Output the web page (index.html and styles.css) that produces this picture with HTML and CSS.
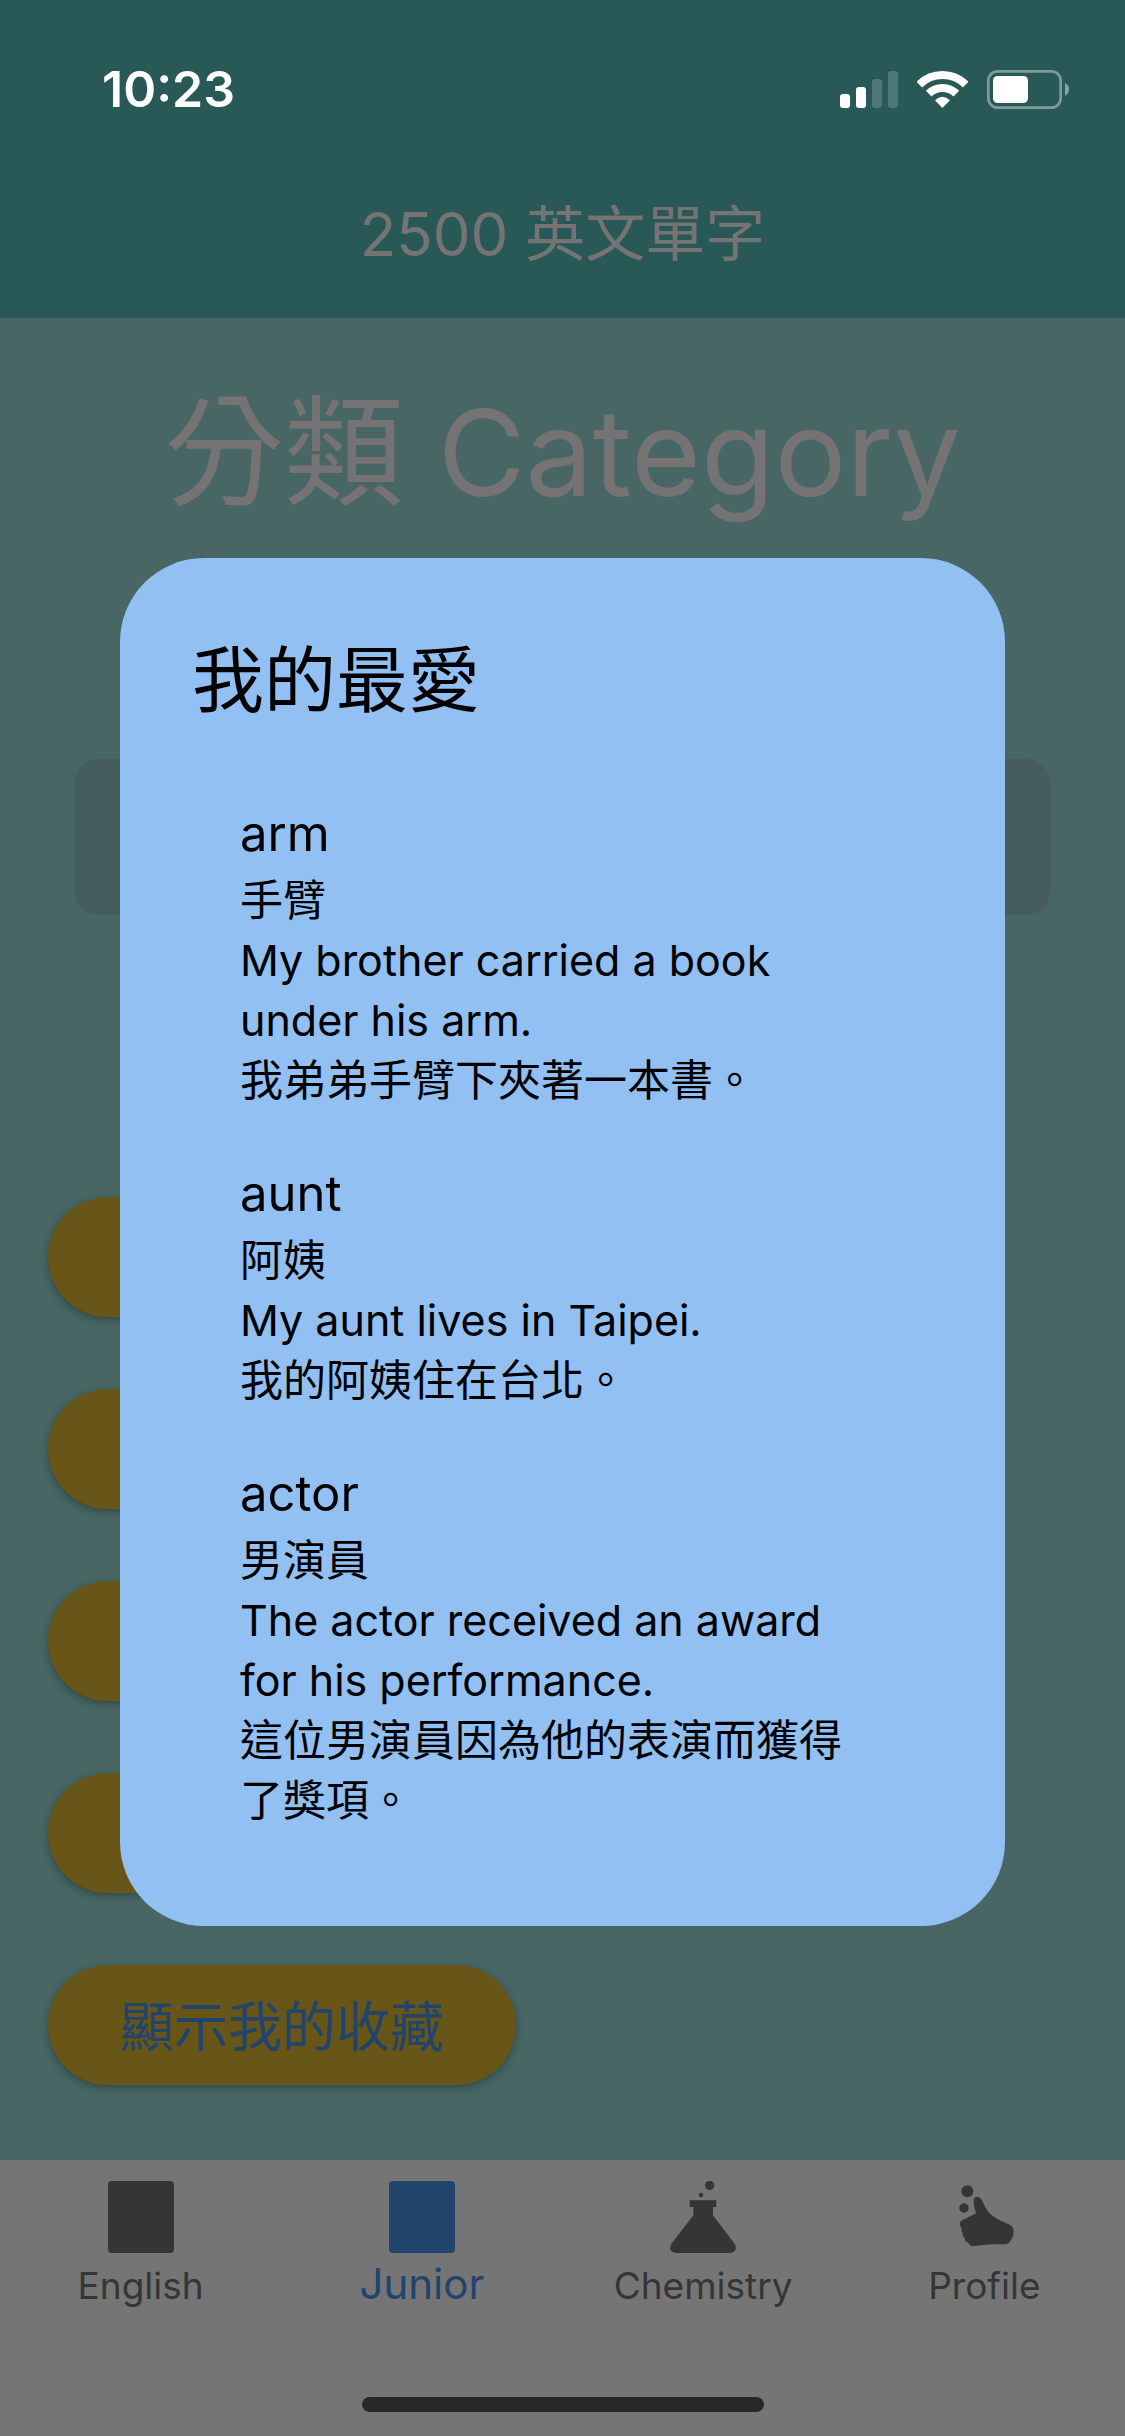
FILE: index.html
```
<!DOCTYPE html>
<html lang="zh-Hant">
<head>
<meta charset="utf-8">
<meta name="viewport" content="width=device-width, initial-scale=1">
<title>2500 英文單字</title>
<link rel="stylesheet" href="styles.css">
</head>
<body>
<div class="app">
  <header class="app-header">
    <div class="status-bar">
      <span class="status-time">10:23</span>
      <div class="status-icons">
        <svg width="58" height="37" viewBox="0 0 58 37" fill="#fff" aria-hidden="true">
          <rect y="23" width="10" height="14" rx="3"/>
          <rect x="16" y="16" width="10" height="21" rx="3"/>
          <rect x="32" y="8" width="10" height="29" rx="3" opacity=".18"/>
          <rect x="48" width="10" height="37" rx="3" opacity=".18"/>
        </svg>
        <svg width="51" height="37" viewBox="0 0 153 111" aria-hidden="true">
          <g fill="none" stroke="#fff" stroke-width="24">
            <path d="M7 41A98 98 0 0 1 146 41"/>
            <path d="M35 68A59 59 0 0 1 118 68"/>
          </g>
          <path fill="#fff" d="M54 88Q76 66 99 88L76 111Z"/>
        </svg>
        <svg width="82" height="39" viewBox="0 0 246 117" aria-hidden="true">
          <rect x="4" y="4" width="217" height="109" rx="28" fill="none" stroke="#fff" stroke-width="8" opacity=".4"/>
          <rect x="18" y="18" width="105" height="81" rx="14" fill="#fff"/>
          <path d="M234 39Q246 45 246 58T234 77Z" fill="#fff" opacity=".45"/>
        </svg>
      </div>
    </div>
    <h1 class="app-title">2500 英文單字</h1>
  </header>

  <main class="content">
    <h2 class="category-title">分類 Category</h2>
    <input class="search-box" type="text" aria-label="搜尋">
    <div class="actions">
      <button class="pill" type="button"></button>
      <button class="pill" type="button"></button>
      <button class="pill" type="button"></button>
      <button class="pill" type="button"></button>
      <button class="pill" type="button">顯示我的收藏</button>
    </div>
  </main>

  <nav class="tab-bar">
    <div class="tabs">
      <a class="tab" href="#english">
        <svg class="tab-icon" viewBox="0 0 198 216" aria-hidden="true"><rect width="198" height="216" rx="12"/></svg>
        <span>English</span>
      </a>
      <a class="tab tab-active" href="#junior" aria-current="page">
        <svg class="tab-icon" viewBox="0 0 198 216" aria-hidden="true"><rect width="198" height="216" rx="12"/></svg>
        <span>Junior</span>
      </a>
      <a class="tab" href="#chemistry">
        <svg class="tab-icon" viewBox="0 0 198 216" aria-hidden="true">
          <circle cx="119" cy="13" r="14"/>
          <circle cx="93" cy="42" r="7"/>
          <path d="M59 58H139V78H129V103L192 186C204 202 195 216 179 216H19C3 216-6 202 6 186L70 103V78H59Z"/>
        </svg>
        <span>Chemistry</span>
      </a>
      <a class="tab" href="#profile">
        <svg class="tab-icon" viewBox="0 0 198 216" aria-hidden="true">
          <circle cx="49" cy="31" r="18"/>
          <circle cx="39" cy="81" r="14"/>
          <path d="M79 47C71 47 67 54 68 63C69 75 71 87 76 97L33 118C25 122 24 134 32 141C30 147 31 153 35 157C34 163 36 168 41 171C41 179 45 183 51 184C54 192 61 196 69 195C100 191 130 189 161 190C170 190 176 186 180 178C185 168 188 160 188 150C188 139 182 134 173 130C155 122 139 115 125 105C107 92 99 70 91 55C88 50 84 47 79 47Z"/>
        </svg>
        <span>Profile</span>
      </a>
    </div>
    <div class="home-indicator"></div>
  </nav>

  <div class="overlay">
    <section class="dialog" role="dialog" aria-modal="true" aria-labelledby="dialog-title">
      <h2 class="dialog-title" id="dialog-title">我的最愛</h2>
      <div class="word-list">
        <article class="word">
          <h3 class="word-term">arm</h3>
          <p>手臂</p>
          <p>My brother carried a book under his arm.</p>
          <p>我弟弟手臂下夾著一本書。</p>
        </article>
        <article class="word">
          <h3 class="word-term">aunt</h3>
          <p>阿姨</p>
          <p>My aunt lives in Taipei.</p>
          <p>我的阿姨住在台北。</p>
        </article>
        <article class="word">
          <h3 class="word-term">actor</h3>
          <p>男演員</p>
          <p>The actor received an award for his performance.</p>
          <p>這位男演員因為他的表演而獲得了獎項。</p>
        </article>
      </div>
    </section>
  </div>
</div>
</body>
</html>
```
FILE: styles.css
```
:root {
  --header: #285957;
  --surface: #476664;
  --muted: #757575;
  --title: #757373;
  --ink: #353535;
  --gold: #685618;
  --blue: #22436b;
  --dialog: #92c0f3;
}

* {
  box-sizing: border-box;
  margin: 0;
}

body {
  font-family: Inter, "Noto Sans CJK TC", sans-serif;
  font-weight: 380;
  background: var(--surface);
}

h1, h2, h3 {
  font-weight: 380;
}

.app {
  position: relative;
  display: flex;
  flex-direction: column;
  min-height: 100vh;
}

.app-header {
  background: var(--header);
}

.status-bar {
  display: flex;
  justify-content: space-between;
  align-items: center;
  height: 150px;
  padding: 28px 56px 0 102px;
}

.status-time {
  color: #fff;
  font-size: 50px;
  font-weight: 600;
}

.status-icons {
  display: flex;
  align-items: center;
  gap: 19px;
}

.app-title {
  color: var(--title);
  font-size: 60px;
  line-height: 168px;
  text-align: center;
}

.content {
  flex: 1;
  display: flex;
  flex-direction: column;
  padding: 63px 48px 75px;
}

.category-title {
  color: var(--title);
  font-size: 120px;
  line-height: 144px;
  text-align: center;
}

.search-box {
  height: 156px;
  margin: 234px 27px 282px;
  padding: 0 36px;
  border: 0;
  border-radius: 24px;
  background: #455d5d;
  color: var(--muted);
  font: inherit;
  font-size: 48px;
}

.actions {
  display: flex;
  flex-direction: column;
  align-items: flex-start;
  gap: 72px;
}

.pill {
  min-width: 468px;
  height: 120px;
  padding: 0 72px 4px;
  border: 0;
  border-radius: 60px;
  background: var(--gold);
  box-shadow: 0 3px 8px rgba(0, 0, 0, .3);
  color: var(--blue);
  font: inherit;
  font-size: 54px;
}

.tab-bar {
  display: flex;
  flex-direction: column;
  align-items: center;
  justify-content: space-between;
  height: 276px;
  padding: 21px 0 24px;
  background: var(--muted);
}

.tabs {
  display: grid;
  grid-template-columns: repeat(4, 1fr);
  width: 100%;
}

.tab {
  display: flex;
  flex-direction: column;
  align-items: center;
  gap: 8px;
  color: var(--ink);
  font-size: 37px;
  line-height: 50px;
  text-decoration: none;
}

.tab-active {
  color: var(--blue);
  font-size: 42px;
  line-height: 46px;
}

.tab-icon {
  width: 66px;
  height: 72px;
  fill: currentColor;
}

.home-indicator {
  width: 402px;
  height: 15px;
  border-radius: 8px;
  background: #282828;
}

.overlay {
  position: absolute;
  inset: 0;
  display: flex;
  align-items: center;
  padding: 132px 120px 84px;
}

.dialog {
  flex: 1;
  padding: 74px 72px 48px;
  border-radius: 84px;
  background: var(--dialog);
  color: #000;
}

.dialog-title {
  font-size: 72px;
  line-height: 96px;
}

.word-list {
  padding: 70px 72px 0 48px;
}

.word {
  padding-bottom: 48px;
  font-size: 43px;
  line-height: 60px;
}

.word-term {
  font-size: 49px;
  line-height: 72px;
}
```
